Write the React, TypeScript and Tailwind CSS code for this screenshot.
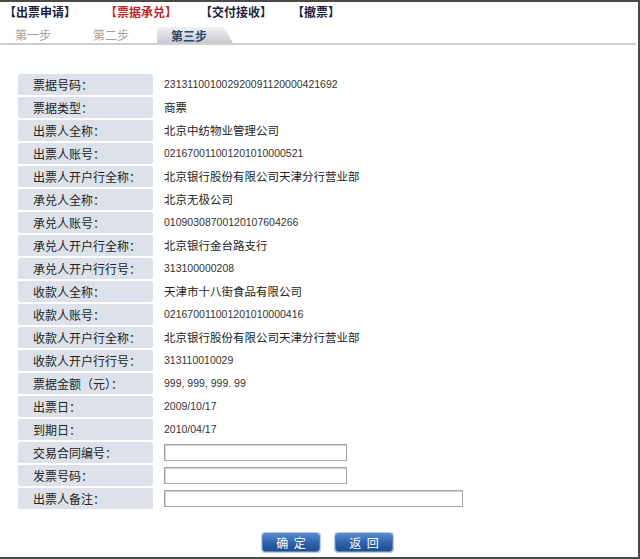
import React from "react";

type Row = { label: string; value?: string; input?: "short" | "long"; num?: boolean };

const rows: Row[] = [
  { label: "票据号码：", value: "231311001002920091120000421692", num: true },
  { label: "票据类型：", value: "商票" },
  { label: "出票人全称：", value: "北京中纺物业管理公司" },
  { label: "出票人账号：", value: "021670011001201010000521", num: true },
  { label: "出票人开户行全称：", value: "北京银行股份有限公司天津分行营业部" },
  { label: "承兑人全称：", value: "北京无极公司" },
  { label: "承兑人账号：", value: "01090308700120107604266", num: true },
  { label: "承兑人开户行全称：", value: "北京银行金台路支行" },
  { label: "承兑人开户行行号：", value: "313100000208", num: true },
  { label: "收款人全称：", value: "天津市十八街食品有限公司" },
  { label: "收款人账号：", value: "021670011001201010000416", num: true },
  { label: "收款人开户行全称：", value: "北京银行股份有限公司天津分行营业部" },
  { label: "收款人开户行行号：", value: "313110010029", num: true },
  { label: "票据金额（元）：", value: "999, 999, 999. 99", num: true },
  { label: "出票日：", value: "2009/10/17", num: true },
  { label: "到期日：", value: "2010/04/17", num: true },
  { label: "交易合同编号：", input: "short" },
  { label: "发票号码：", input: "short" },
  { label: "出票人备注：", input: "long" },
];

const cjk = "font-['SimSun','Noto_Sans_CJK_SC',sans-serif]";

export default function App() {
  return (
    <div
      className={`w-[640px] h-[559px] bg-white border-t-2 border-r-2 border-b-2 border-[#4a4a4a] overflow-hidden text-[12px] text-[#222] ${cjk}`}
    >
      {/* Top menu */}
      <div className="flex items-center h-[20px] pl-[4px] text-[12px] font-bold">
        <span className="text-[#1c1c3c] w-[101px]">【出票申请】</span>
        <span className="text-[#c2262b] w-[95px]">【票据承兑】</span>
        <span className="text-[#1c1c3c] w-[92px]">【交付接收】</span>
        <span className="text-[#1c1c3c]">【撤票】</span>
      </div>

      {/* Step tabs */}
      <div className="flex items-end h-[23px] border-b-2 border-[#cfcfcf] mr-[2px] leading-[14px]">
        <span className="ml-[15px] w-[78px] pb-[1px] text-[#a0a0a0]">第一步</span>
        <span className="w-[64px] pb-[1px] text-[#a0a0a0]">第二步</span>
        <span className="w-[76px] h-[16px] pl-[14px] pt-[2px] rounded-tl-[4px] bg-gradient-to-b from-[#f2f2f2] to-[#c6c9ce] text-[#2a4a6a] font-bold [clip-path:polygon(0_0,88%_0,100%_100%,0_100%)]">
          第三步
        </span>
      </div>

      {/* Detail table */}
      <div className="mt-[29px] ml-[18px] flex flex-col gap-[2px]">
        {rows.map((r) => (
          <div key={r.label} className="flex items-center h-[21px]">
            <div className="w-[135px] h-full flex items-center pl-[15px] bg-[#dde2ea] rounded-[2px] text-[#222]">
              {r.label}
            </div>
            <div className="ml-[11px] flex items-center">
              {r.input ? (
                <div
                  className={`h-[17px] bg-white border border-[#a6a6a6] shadow-[inset_1px_1px_0_#d0d0d0] ${
                    r.input === "short" ? "w-[183px]" : "w-[299px]"
                  }`}
                />
              ) : (
                <span
                  className={
                    r.num
                      ? "font-['Liberation_Sans',Arial,sans-serif] text-[10.5px] text-[#333]"
                      : "text-[11.5px] text-[#222]"
                  }
                >
                  {r.value}
                </span>
              )}
            </div>
          </div>
        ))}
      </div>

      {/* Buttons */}
      <div className="flex gap-[15px] mt-[24px] ml-[262px]">
        {["确  定", "返  回"].map((t) => (
          <button
            key={t}
            className="w-[58px] h-[19px] rounded-[3px] border border-[#5d84bf] bg-gradient-to-b from-[#5a8ad0] via-[#2f63ad] to-[#1f4e93] text-white text-[12px] leading-none whitespace-pre shadow-[0_0_0_1px_#b9cbe6]"
          >
            {t}
          </button>
        ))}
      </div>
    </div>
  );
}
